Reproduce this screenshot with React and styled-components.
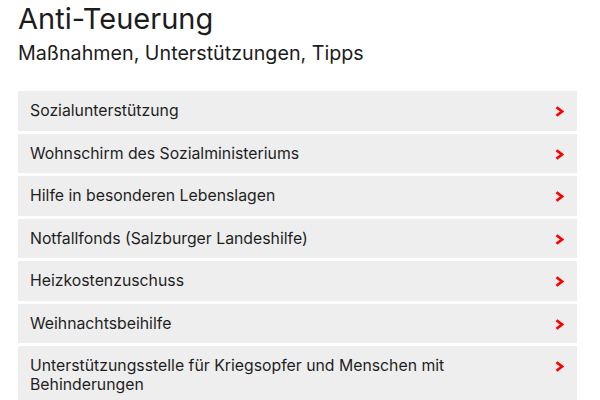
import styled, { createGlobalStyle } from "styled-components";

const GlobalStyle = createGlobalStyle`
  body {
    margin: 0;
    background: #fff;
    font-family: Inter, "Noto Sans", sans-serif;
    color: #1f1f1f;
  }
`;

const Page = styled.div`
  padding: 1px 23px 0 18px;
`;

const Title = styled.h1`
  margin: 0;
  font-size: 29px;
  font-weight: 400;
  line-height: 36px;
  color: #1c1c1c;
`;

const Subtitle = styled.h2`
  margin: 0 0 22px;
  font-size: 19.7px;
  font-weight: 400;
  line-height: 32px;
  color: #1c1c1c;
`;

const List = styled.ul`
  list-style: none;
  margin: 0;
  padding: 0;
  display: flex;
  flex-direction: column;
  gap: 3px;
`;

const Item = styled.li`
  display: flex;
  align-items: flex-start;
  justify-content: space-between;
  gap: 20px;
  background: #eeeeee;
  padding: 11px 13px 10px 12px;
  font-size: 15.8px;
  line-height: 18.5px;
  color: #1f1f1f;
  cursor: pointer;
`;

const Label = styled.span`
  flex: 1;
  max-width: 470px;
`;

const Chevron = styled.svg`
  flex: none;
  width: 9px;
  height: 11px;
  margin-top: 4px;
`;

const punkte = [
  "Sozialunterstützung",
  "Wohnschirm des Sozialministeriums",
  "Hilfe in besonderen Lebenslagen",
  "Notfallfonds (Salzburger Landeshilfe)",
  "Heizkostenzuschuss",
  "Weihnachtsbeihilfe",
  "Unterstützungsstelle für Kriegsopfer und Menschen mit Behinderungen",
];

export default function App() {
  return (
    <Page>
      <GlobalStyle />
      <Title>Anti-Teuerung</Title>
      <Subtitle>Maßnahmen, Unterstützungen, Tipps</Subtitle>
      <List>
        {punkte.map((p) => (
          <Item key={p}>
            <Label>{p}</Label>
            <Chevron viewBox="0 0 9 11">
              <path d="M1.5 1.2 L7 5.5 L1.5 9.8" fill="none" stroke="#f00" strokeWidth="2.7" />
            </Chevron>
          </Item>
        ))}
      </List>
    </Page>
  );
}
